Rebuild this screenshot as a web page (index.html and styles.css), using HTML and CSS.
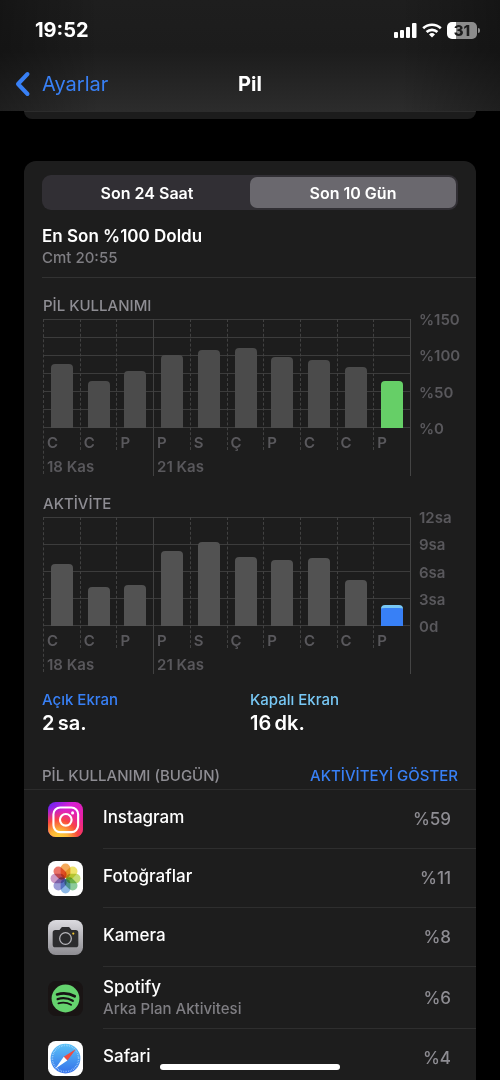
FILE: index.html
```html
<!DOCTYPE html>
<html lang="tr">

<head>
    <meta charset="UTF-8">
    <meta name="viewport" content="width=device-width, initial-scale=1.0">
    <link rel="stylesheet" href="styles.css">
    <title>Pil</title>
</head>

<body>
    <header class="header">
        <div class="status">
            <span class="time">19:52</span>
            <div class="status-icons">
                <svg width="23" height="15" viewBox="0 0 23 15" fill="#fff">
                    <rect x="0" y="9" width="4" height="6" rx="1" />
                    <rect x="6" y="7" width="4" height="8" rx="1" />
                    <rect x="12" y="4" width="4" height="11" rx="1" />
                    <rect x="18" y="0" width="4.5" height="15" rx="1" />
                </svg>
                <svg width="20" height="15" viewBox="0 0 20 15" fill="none" stroke="#fff" stroke-width="2.6">
                    <path d="M1.2 5.3a12.6 12.6 0 0 1 17.6 0" />
                    <path d="M4.6 9a7.8 7.8 0 0 1 10.8 0" />
                    <path d="M10 14.6l-3-3.1a4.4 4.4 0 0 1 6 0z" fill="#fff" stroke="none" />
                </svg>
                <span class="battery">31</span>
            </div>
        </div>
        <nav class="nav">
            <a href="#" class="back">
                <svg width="16" height="26" viewBox="0 0 16 26" fill="none" stroke="#3880f6" stroke-width="4" stroke-linecap="round" stroke-linejoin="round">
                    <path d="M12.5 3L3 13l9.5 10" />
                </svg>
                Ayarlar
            </a>
            <h1>Pil</h1>
        </nav>
    </header>

    <main>
        <div class="card-end"></div>

        <section class="card">
            <div class="segment">
                <button type="button">Son 24 Saat</button>
                <button type="button" class="active">Son 10 Gün</button>
            </div>

            <div class="last-charge">
                <h2>En Son %100 Doldu</h2>
                <p>Cmt 20:55</p>
            </div>

            <h3 class="chart-title">PİL KULLANIMI</h3>
            <div class="chart usage">
                <div class="plot">
                    <div class="day first"><div class="slot"><i style="height: 59%"></i></div><span>C</span><b>18 Kas</b></div>
                    <div class="day"><div class="slot"><i style="height: 43%"></i></div><span>C</span></div>
                    <div class="day"><div class="slot"><i style="height: 52%"></i></div><span>P</span></div>
                    <div class="day week"><div class="slot"><i style="height: 67%"></i></div><span>P</span><b>21 Kas</b></div>
                    <div class="day"><div class="slot"><i style="height: 72%"></i></div><span>S</span></div>
                    <div class="day"><div class="slot"><i style="height: 73%"></i></div><span>Ç</span></div>
                    <div class="day"><div class="slot"><i style="height: 65%"></i></div><span>P</span></div>
                    <div class="day"><div class="slot"><i style="height: 62%"></i></div><span>C</span></div>
                    <div class="day"><div class="slot"><i style="height: 56%"></i></div><span>C</span></div>
                    <div class="day today"><div class="slot"><i style="height: 43%"></i></div><span>P</span></div>
                </div>
                <div class="axis">
                    <span>%150</span>
                    <span>%100</span>
                    <span>%50</span>
                    <span>%0</span>
                </div>
            </div>

            <h3 class="chart-title">AKTİVİTE</h3>
            <div class="chart activity">
                <div class="plot">
                    <div class="day first"><div class="slot"><i style="height: 57%"></i></div><span>C</span><b>18 Kas</b></div>
                    <div class="day"><div class="slot"><i style="height: 36%"></i></div><span>C</span></div>
                    <div class="day"><div class="slot"><i style="height: 38%"></i></div><span>P</span></div>
                    <div class="day week"><div class="slot"><i style="height: 69%"></i></div><span>P</span><b>21 Kas</b></div>
                    <div class="day"><div class="slot"><i style="height: 77%"></i></div><span>S</span></div>
                    <div class="day"><div class="slot"><i style="height: 63%"></i></div><span>Ç</span></div>
                    <div class="day"><div class="slot"><i style="height: 61%"></i></div><span>P</span></div>
                    <div class="day"><div class="slot"><i style="height: 62%"></i></div><span>C</span></div>
                    <div class="day"><div class="slot"><i style="height: 42%"></i></div><span>C</span></div>
                    <div class="day today"><div class="slot"><i style="height: 19%"></i></div><span>P</span></div>
                </div>
                <div class="axis">
                    <span>12sa</span>
                    <span>9sa</span>
                    <span>6sa</span>
                    <span>3sa</span>
                    <span>0d</span>
                </div>
            </div>

            <div class="totals">
                <div>
                    <h4>Açık Ekran</h4>
                    <p>2&#8201;sa.</p>
                </div>
                <div>
                    <h4 class="light">Kapalı Ekran</h4>
                    <p>16&#8201;dk.</p>
                </div>
            </div>

            <div class="list-head">
                <h3>PİL KULLANIMI (BUGÜN)</h3>
                <button type="button">AKTİVİTEYİ GÖSTER</button>
            </div>

            <ul class="apps">
                <li>
                    <svg class="icon" viewBox="0 0 36 36">
                        <defs>
                            <linearGradient id="ig-base" x1="0" y1="0" x2="1" y2="1">
                                <stop offset="0" stop-color="#5a25f5" />
                                <stop offset=".35" stop-color="#d620d8" />
                                <stop offset="1" stop-color="#f5227a" />
                            </linearGradient>
                            <radialGradient id="ig-warm" cx=".3" cy="1.08" r=".95">
                                <stop offset="0" stop-color="#ffd93b" />
                                <stop offset=".3" stop-color="#fdb336" />
                                <stop offset=".6" stop-color="#f9483f" />
                                <stop offset="1" stop-color="#f0228c" stop-opacity="0" />
                            </radialGradient>
                        </defs>
                        <rect width="36" height="36" rx="8" fill="url(#ig-base)" />
                        <rect width="36" height="36" rx="8" fill="url(#ig-warm)" />
                        <g fill="none" stroke="#fff" stroke-width="2.2">
                            <rect x="5.6" y="5.6" width="25.4" height="25.4" rx="7" />
                            <circle cx="18.3" cy="18.3" r="6" />
                        </g>
                        <circle cx="25.3" cy="11.2" r="1.6" fill="#fff" />
                    </svg>
                    <div class="row">
                        <div class="info"><h4>Instagram</h4></div>
                        <span class="percent">%59</span>
                    </div>
                </li>
                <li>
                    <svg class="icon" viewBox="0 0 36 36">
                        <rect width="36" height="36" rx="8" fill="#fff" />
                        <g class="petals">
                            <rect x="13" y="2.6" width="10" height="15" rx="5" fill="#f5ab5c" />
                            <rect x="13" y="2.6" width="10" height="15" rx="5" fill="#eee36a" transform="rotate(45 18 18)" />
                            <rect x="13" y="2.6" width="10" height="15" rx="5" fill="#c3dc74" transform="rotate(90 18 18)" />
                            <rect x="13" y="2.6" width="10" height="15" rx="5" fill="#8ccb9b" transform="rotate(135 18 18)" />
                            <rect x="13" y="2.6" width="10" height="15" rx="5" fill="#8cb8e6" transform="rotate(180 18 18)" />
                            <rect x="13" y="2.6" width="10" height="15" rx="5" fill="#9c9cd6" transform="rotate(225 18 18)" />
                            <rect x="13" y="2.6" width="10" height="15" rx="5" fill="#cc9bc6" transform="rotate(270 18 18)" />
                            <rect x="13" y="2.6" width="10" height="15" rx="5" fill="#ea7468" transform="rotate(315 18 18)" />
                        </g>
                    </svg>
                    <div class="row">
                        <div class="info"><h4>Fotoğraflar</h4></div>
                        <span class="percent">%11</span>
                    </div>
                </li>
                <li>
                    <svg class="icon" viewBox="0 0 36 36">
                        <defs>
                            <linearGradient id="cam" x1="0" y1="0" x2="0" y2="1">
                                <stop offset="0" stop-color="#dcdbe0" />
                                <stop offset="1" stop-color="#8d8c91" />
                            </linearGradient>
                        </defs>
                        <rect width="36" height="36" rx="8" fill="url(#cam)" />
                        <path d="M7.5 10.3h4.3l1.6-2.2c.4-.6.8-.8 1.5-.8h6.2c.7 0 1.1.2 1.5.8l1.6 2.2h4.3c1.8 0 2.7 1 2.7 2.7v12.4c0 1.8-1 2.7-2.7 2.7h-21c-1.8 0-2.7-1-2.7-2.7V13c0-1.8 1-2.7 2.7-2.7z" fill="#2c2c2e" />
                        <circle cx="18" cy="19" r="6" fill="#29292b" stroke="#b7b6bb" stroke-width="1.3" />
                        <circle cx="26" cy="14" r="1.1" fill="#f2c62f" />
                    </svg>
                    <div class="row">
                        <div class="info"><h4>Kamera</h4></div>
                        <span class="percent">%8</span>
                    </div>
                </li>
                <li>
                    <svg class="icon" viewBox="0 0 36 36">
                        <rect width="36" height="36" rx="8" fill="#191414" />
                        <circle cx="18" cy="18" r="14.3" fill="#65d36e" />
                        <g fill="none" stroke="#171414" stroke-linecap="round">
                            <path d="M9.3 13.8c6-1.7 12.8-1.1 18.2 1.9" stroke-width="2.7" />
                            <path d="M9.9 18.6c5.2-1.5 10.9-.9 15.6 1.8" stroke-width="2.3" />
                            <path d="M10.7 23c4.5-1.2 9.1-.8 13 1.5" stroke-width="1.9" />
                        </g>
                    </svg>
                    <div class="row">
                        <div class="info with-note"><h4>Spotify</h4><p>Arka Plan Aktivitesi</p></div>
                        <span class="percent">%6</span>
                    </div>
                </li>
                <li>
                    <svg class="icon" viewBox="0 0 36 36">
                        <defs>
                            <linearGradient id="saf" x1="0" y1="0" x2="0" y2="1">
                                <stop offset="0" stop-color="#5bc3f8" />
                                <stop offset="1" stop-color="#3571ea" />
                            </linearGradient>
                        </defs>
                        <rect width="36" height="36" rx="8" fill="#fff" />
                        <circle cx="18" cy="18" r="15.3" fill="url(#saf)" />
                        <circle cx="18" cy="18" r="13.5" fill="none" stroke="#c5e5fb" stroke-width="1.6" stroke-dasharray=".5 1.27" />
                        <path d="M28.8 8.3L16.2 16.2l3.7 3.8z" fill="#f04b40" />
                        <path d="M7.5 28.6l8.7-12.4 3.7 3.8z" fill="#fff" />
                    </svg>
                    <div class="row">
                        <div class="info"><h4>Safari</h4></div>
                        <span class="percent">%4</span>
                    </div>
                </li>
            </ul>
        </section>
    </main>

    <div class="home-bar"></div>
</body>

</html>
```

FILE: styles.css
```css
* {
    margin: 0;
    padding: 0;
    box-sizing: border-box;
}

body {
    height: 100vh;
    overflow: hidden;
    background-color: #000;
    color: #fff;
    font-family: Inter, "Noto Sans", sans-serif;
}

ul {
    list-style: none;
}

button {
    border: none;
    background: none;
    font-family: inherit;
    cursor: pointer;
}

svg {
    display: block;
}

/* header */
.header {
    height: 111px;
    padding-top: 15px;
    background: linear-gradient(to right, rgba(0, 0, 0, 0.3), transparent 20%, transparent 80%, rgba(0, 0, 0, 0.3)), linear-gradient(#1e1e1e, #1c1c1c 45%, #2c2c2c);
}

.status {
    display: flex;
    justify-content: space-between;
    align-items: center;
    height: 30px;
    padding: 0 23px 0 35px;
}

.time {
    font-size: 20px;
    font-weight: 700;
}

.status-icons {
    display: flex;
    align-items: center;
    gap: 5px;
}

.battery {
    position: relative;
    width: 30px;
    height: 17px;
    border-radius: 5px;
    background: linear-gradient(to right, #fff 9px, #8c8c8c 9px);
    color: #1c1c1c;
    font-size: 15px;
    font-weight: 800;
    line-height: 17px;
    text-align: center;
}

.battery::after {
    content: "";
    position: absolute;
    top: 6px;
    right: -3px;
    width: 2px;
    height: 5px;
    border-radius: 0 2px 2px 0;
    background-color: #8c8c8c;
}

.nav {
    display: grid;
    grid-template-columns: 1fr auto 1fr;
    align-items: center;
    height: 50px;
    margin-top: 14px;
    padding: 0 15px;
}

.nav h1 {
    font-size: 20px;
    font-weight: 700;
}

.back {
    display: flex;
    align-items: center;
    gap: 11px;
    color: #3880f6;
    font-size: 20px;
    text-decoration: none;
}

/* cards */
.card-end {
    height: 8px;
    margin: 0 24px 42px;
    border-top: 1px solid #2c2c2c;
    border-radius: 0 0 12px 12px;
    background-color: #1c1c1c;
}

.card {
    margin: 0 24px;
    padding: 14px 0 20px 18px;
    border-radius: 12px;
    background-color: #1d1d1d;
}

.segment {
    display: grid;
    grid-template-columns: 1fr 1fr;
    height: 35px;
    margin-right: 18px;
    padding: 2px;
    border-radius: 9px;
    background-color: #312f34;
}

.segment button {
    border-radius: 7px;
    color: #fff;
    font-size: 16px;
    font-weight: 600;
}

.segment .active {
    background-color: #6a686e;
}

.last-charge {
    padding: 15px 0 9px;
    border-bottom: 1px solid #323232;
}

.last-charge h2 {
    font-size: 17px;
    font-weight: 600;
    line-height: 22px;
}

.last-charge p {
    color: #7f7e83;
    font-size: 15px;
    font-weight: 500;
    line-height: 21px;
}

/* charts */
.chart-title {
    padding: 19px 0 4px 1px;
    color: #8e8d93;
    font-size: 15px;
    font-weight: 500;
    line-height: 18px;
}

.chart {
    display: flex;
    margin-left: 1px;
    color: #59585c;
    font-size: 15px;
    font-weight: 600;
    line-height: 18px;
}

.plot {
    flex: 1;
    display: grid;
    grid-template-columns: repeat(10, minmax(0, 1fr));
    align-items: start;
    height: 157px;
    border-right: 1px solid #444;
    background-size: 100% 109px;
    background-repeat: no-repeat;
}

.usage .plot {
    background-image: repeating-linear-gradient(#3c3c3c 0 1px, transparent 1px 18px);
}

.activity .plot {
    background-image: repeating-linear-gradient(#3c3c3c 0 1px, transparent 1px 27px);
}

.day {
    height: 131px;
    border-left: 1px dashed #414141;
}

.first {
    height: 155px;
}

.week {
    height: 157px;
    border-left-style: solid;
}

.slot {
    display: flex;
    align-items: flex-end;
    height: 109px;
    padding-left: 7px;
}

.slot i {
    width: 22px;
    border-radius: 4px 4px 0 0;
    background-color: #4b4b4b;
}

.activity .slot i {
    background-color: #525252;
}

.usage .today .slot i {
    background-color: #66cf67;
}

.activity .today .slot i {
    border-top: 3px solid #78c8f5;
    background-color: #3880f6;
}

.day span,
.day b {
    display: block;
    margin: 6px 0 0 3px;
    font-weight: 600;
    white-space: nowrap;
}

.axis {
    display: flex;
    flex-direction: column;
    justify-content: space-between;
    width: 65px;
    height: 127px;
    margin-top: -8px;
    padding-left: 8px;
}

.totals {
    display: grid;
    grid-template-columns: 1fr 1fr;
    margin-right: 18px;
    padding-top: 16px;
}

.totals h4 {
    color: #3880f6;
    font-size: 15px;
    font-weight: 500;
    line-height: 20px;
}

.totals .light {
    color: #78c8f5;
}

.totals p {
    font-size: 20px;
    font-weight: 600;
    line-height: 27px;
}

/* app list */
.list-head {
    display: flex;
    justify-content: space-between;
    align-items: center;
    margin-left: -18px;
    padding: 29px 18px 3px;
    border-bottom: 1px solid #2c2c2c;
}

.list-head h3,
.list-head button {
    color: #8e8d93;
    font-size: 15px;
    font-weight: 500;
    line-height: 20px;
}

.list-head button {
    color: #3880f6;
}

.apps li {
    display: flex;
    align-items: center;
    gap: 20px;
    padding-left: 6px;
}

.icon {
    width: 35px;
    height: 35px;
}

.petals rect {
    mix-blend-mode: multiply;
}

.row {
    flex: 1;
    display: flex;
    justify-content: space-between;
    align-items: center;
    min-height: 59px;
    padding-right: 25px;
    border-bottom: 1px solid #2e2e2e;
}

.info {
    padding-bottom: 5px;
}

.with-note {
    padding: 9px 0;
}

.info h4 {
    font-size: 17px;
    font-weight: 500;
    line-height: 22px;
}

.info p {
    color: #7f7e83;
    font-size: 15px;
    font-weight: 500;
    line-height: 21px;
}

.percent {
    color: #8e8d93;
    font-size: 17px;
    font-weight: 500;
}

.home-bar {
    position: fixed;
    bottom: 10px;
    left: 50%;
    width: 36%;
    height: 6px;
    border-radius: 3px;
    background-color: #fff;
    transform: translateX(-50%);
}
```
